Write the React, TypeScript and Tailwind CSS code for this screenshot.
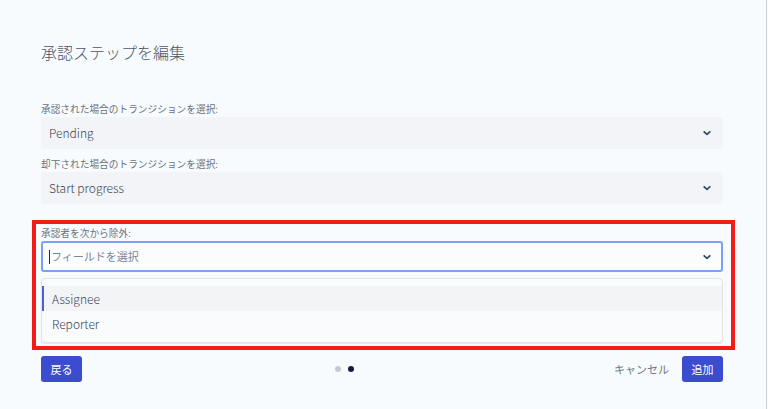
import { ReactNode } from "react";

const font = { fontFamily: '"Noto Sans CJK JP", "Noto Sans", sans-serif' };

function Chevron() {
  return (
    <svg width="10" height="10" viewBox="0 0 10 10" className="shrink-0">
      <path d="M2.2 3.8 L5 6.3 L7.8 3.8" fill="none" stroke="#3d4a63" strokeWidth="1.8" strokeLinecap="round" strokeLinejoin="round" />
    </svg>
  );
}

function Label({ children }: { children: ReactNode }) {
  return <div className="h-[14px] text-[9.7px] leading-[14px] text-[#6b7280]">{children}</div>;
}

function Select({ value }: { value: string }) {
  return (
    <div className="mt-px flex h-[32px] items-center justify-between rounded-[3px] bg-[#f3f4f7] pl-[8px] pr-[11px]">
      <span className="text-[12px] font-light text-[#3a4456]">{value}</span>
      <Chevron />
    </div>
  );
}

export default function App() {
  return (
    <div className="flex h-[409px] w-[768px] overflow-hidden bg-[#f8fbfd]" style={font}>
      <div className="flex w-[766px] flex-col pl-[41px] pr-[43px] pt-[41px]">
        {/* Title */}
        <h1 className="h-[22px] text-[16px] font-light leading-[22px] text-[#4b5669]">承認ステップを編集</h1>

        {/* Transitions */}
        <div className="mt-[39px]">
          <Label>承認された場合のトランジションを選択:</Label>
          <Select value="Pending" />
        </div>
        <div className="mt-[8px]">
          <Label>却下された場合のトランジションを選択:</Label>
          <Select value="Start progress" />
        </div>

        {/* Exclude approvers (highlighted) */}
        <div className="ml-[-9px] mr-[-12px] mt-[16px] border-4 border-[#f21b17] pb-[3px] pl-[5px] pr-[8px] pt-[2px]">
          <Label>承認者を次から除外:</Label>
          <div className="mt-px flex h-[31px] items-center justify-between rounded-[3px] border-2 border-[#78a2f6] bg-[#fafcfe] pl-[6px] pr-[9px]">
            <div className="flex items-center">
              <span className="mr-px h-[14px] w-px bg-[#172b4d]" />
              <span className="text-[11px] text-[#7a869a]">フィールドを選択</span>
            </div>
            <Chevron />
          </div>
          <div className="mt-[6px] rounded-[4px] border border-[#e1e3e8] bg-[#f9fbfd] pb-[6px] pt-[7px] shadow-[0_1px_1px_rgba(9,30,66,0.08)]">
            <div className="flex h-[25px] items-center border-l-2 border-[#4c5fd5] bg-[#f3f4f6] pl-[8px] text-[12px] font-light text-[#3a4456]">
              Assignee
            </div>
            <div className="flex h-[25px] items-center border-l-2 border-transparent pl-[8px] text-[12px] font-light text-[#3a4456]">
              Reporter
            </div>
          </div>
        </div>

        {/* Footer */}
        <div className="mt-[6px] flex items-center justify-between">
          <button className="flex h-[26px] w-[41px] items-center justify-center rounded-[3px] bg-[#3b4cd0] text-[11px] text-white">
            戻る
          </button>
          <div className="flex items-center gap-[7px]">
            <span className="h-[6px] w-[6px] rounded-full bg-[#c4c9d3]" />
            <span className="h-[6px] w-[6px] rounded-full bg-[#141a44]" />
          </div>
          <div className="flex items-center gap-[5px]">
            <button className="h-[26px] px-[8px] text-[11px] text-[#6b778c]">キャンセル</button>
            <button className="flex h-[26px] w-[41px] items-center justify-center rounded-[3px] bg-[#3b4cd0] text-[11px] text-white">
              追加
            </button>
          </div>
        </div>
      </div>
      <div className="w-px bg-[#cfd3d8]" />
    </div>
  );
}
